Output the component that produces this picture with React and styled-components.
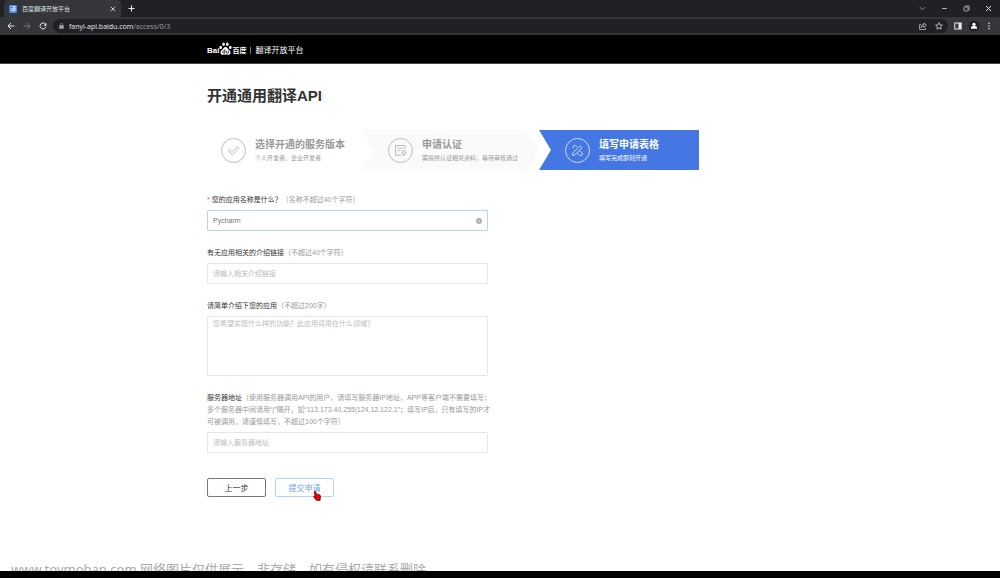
import React, { useState } from 'react'
import styled, { createGlobalStyle, css } from 'styled-components'

const steps = [
  { title: '选择开通的服务版本', note: '个人开发者、企业开发者', icon: 'check' },
  { title: '申请认证', note: '需提供认证相关资料，等待审核通过', icon: 'form', shape: 'middle' },
  { title: '填写申请表格', note: '填写完成即刻开通', icon: 'pencil', shape: 'active' },
]

function App() {
  return (
    <Page>
      <GlobalStyle />
      <TabStrip>
        <Tab>
          <Favicon>译</Favicon>
          <TabTitle>百度翻译开放平台</TabTitle>
          <IconButton aria-label="关闭标签页"><CloseIcon size={6} /></IconButton>
        </Tab>
        <NewTab aria-label="新标签页">
          <svg width="7" height="7" viewBox="0 0 7 7"><path d="M3.5 .5v6M.5 3.5h6" stroke="#e8eaed" strokeWidth="1.1" /></svg>
        </NewTab>
        <WindowButtons>
          <IconButton aria-label="搜索标签页">
            <svg width="7" height="7" viewBox="0 0 7 7"><path d="M1 2.2l2.5 2.5L6 2.2" fill="none" stroke="#9a9b9d" strokeWidth=".9" /></svg>
          </IconButton>
          <IconButton aria-label="最小化">
            <svg width="7" height="7" viewBox="0 0 7 7"><path d="M1 3.5h5" stroke="#bdc1c6" strokeWidth=".9" /></svg>
          </IconButton>
          <IconButton aria-label="还原">
            <svg width="7" height="7" viewBox="0 0 7 7" fill="none" stroke="#bdc1c6" strokeWidth=".8"><rect x="1" y="2" width="4" height="4" rx=".7" /><path d="M2.2 1.9V1h3.9v3.9h-1" /></svg>
          </IconButton>
          <IconButton aria-label="关闭"><CloseIcon size={7} /></IconButton>
        </WindowButtons>
      </TabStrip>

      <Toolbar>
        <NavButtons>
          <IconButton aria-label="后退">
            <svg width="8" height="8" viewBox="0 0 8 8" fill="none" stroke="#e8eaed"><path d="M7.3 4H1.2M4 1L1 4l3 3" /></svg>
          </IconButton>
          <IconButton aria-label="前进" disabled>
            <svg width="8" height="8" viewBox="0 0 8 8" fill="none" stroke="#75777a"><path d="M.7 4h6.1M4 1l3 3-3 3" /></svg>
          </IconButton>
          <IconButton aria-label="刷新">
            <svg width="8" height="8" viewBox="0 0 8 8"><path d="M6.6 2.3A3 3 0 1 0 7 4.7" fill="none" stroke="#e8eaed" /><path d="M7.4.7v3H4.5z" fill="#e8eaed" /></svg>
          </IconButton>
        </NavButtons>
        <AddressBar>
          <svg width="5" height="6" viewBox="0 0 5 6"><rect x=".3" y="2.3" width="4.4" height="3.5" rx=".4" fill="#a4a6a9" /><path d="M1.3 2.5V1.6a1.2 1.2 0 0 1 2.4 0v.9" fill="none" stroke="#a4a6a9" strokeWidth=".7" /></svg>
          <Url>fanyi-api.baidu.com<span>/access/0/3</span></Url>
          <IconButton aria-label="分享">
            <svg width="8" height="8" viewBox="0 0 8 8" fill="none" stroke="#bdc1c6" strokeWidth=".8"><path d="M2 2.5H.6v5h5.8V6" /><path d="M2.3 5.5c.1-2 1-2.9 2.7-3V1l2.5 2.2L5 5.4V4c-1.2 0-2 .4-2.7 1.5z" /></svg>
          </IconButton>
          <IconButton aria-label="收藏">
            <svg width="8" height="8" viewBox="0 0 8 8"><path d="M4 .7l1 2.2 2.400.2-1.800 1.600.5 2.400L4 5.900 1.900 7.100l.5-2.400L.6 3.100 3 2.900z" fill="none" stroke="#d5d7da" strokeWidth=".8" /></svg>
          </IconButton>
        </AddressBar>
        <IconButton aria-label="侧边栏">
          <svg width="8" height="8" viewBox="0 0 8 8"><rect x=".8" y="1" width="6.4" height="6" fill="none" stroke="#e8eaed" strokeWidth="1" /><path d="M4.5 1H7v6H4.500z" fill="#e8eaed" /></svg>
        </IconButton>
        <IconButton aria-label="个人资料">
          <svg width="12" height="12" viewBox="0 0 12 12"><circle cx="6" cy="6" r="5.5" fill="#202124" /><circle cx="6" cy="4.3" r="1.6" fill="#fff" /><path d="M3 8.800V7.400C3 6.500 4.500 6 6 6s3 .5 3 1.400v1.400z" fill="#fff" /></svg>
        </IconButton>
        <IconButton aria-label="菜单">
          <svg width="6" height="8" viewBox="0 0 6 8" fill="#e8eaed"><circle cx="3" cy="1.2" r=".8" /><circle cx="3" cy="4" r=".8" /><circle cx="3" cy="6.8" r=".8" /></svg>
        </IconButton>
      </Toolbar>

      <Header>
        <Brand href="#">
          <b>Bai</b>
          <PawIcon />
          <BrandName>百度</BrandName>
        </Brand>
        <Divider />
        <Platform href="#">翻译开放平台</Platform>
      </Header>

      <Main>
        <Title>开通通用翻译API</Title>
        <Steps>
          {steps.map((step) => (
            <Step key={step.title} $shape={step.shape}>
              <StepIcon name={step.icon} />
              <StepText $active={step.shape === 'active'}>
                <h2>{step.title}</h2>
                <p>{step.note}</p>
              </StepText>
            </Step>
          ))}
        </Steps>
        <ApplyForm />
      </Main>

      <Watermark>www.toymoban.com 网络图片仅供展示，非存储，如有侵权请联系删除。</Watermark>
      <BottomBar />
    </Page>
  )
}

function ApplyForm() {
  const [name, setName] = useState('Pycharm')

  return (
    <Form onSubmit={(e) => e.preventDefault()}>
      <Field>
        <Label htmlFor="name"><i>*</i> 您的应用名称是什么？<span>（名称不超过40个字符）</span></Label>
        <InputBox $focused>
          <Input id="name" value={name} onChange={(e) => setName(e.target.value)} />
          <IconButton type="button" aria-label="清空" onClick={() => setName('')}>
            <svg width="6" height="6" viewBox="0 0 6 6"><circle cx="3" cy="3" r="3" fill="#b0b0b0" /><path d="M2 2l2 2M4 2L2 4" stroke="#ddd" strokeWidth=".6" /></svg>
          </IconButton>
        </InputBox>
      </Field>
      <Field>
        <Label htmlFor="link">有无应用相关的介绍链接<span>（不超过40个字符）</span></Label>
        <InputBox>
          <Input id="link" placeholder="请输入相关介绍链接" />
        </InputBox>
      </Field>
      <Field>
        <Label htmlFor="intro">请简单介绍下您的应用<span>（不超过200字）</span></Label>
        <TextArea id="intro" placeholder="您希望实现什么样的功能？此应用将用在什么领域？" />
      </Field>
      <Field>
        <Label htmlFor="server">
          服务器地址
          <span>
            （使用服务器调用API的用户，请填写服务器IP地址，APP等客户端不需要填写；<br />
            多个服务器中间请用“|”隔开，如“113.173.40.255|124.12.122.1”；填写IP后，只有填写的IP才<br />
            可被调用，请谨慎填写，不超过100个字符）
          </span>
        </Label>
        <InputBox>
          <Input id="server" placeholder="请输入服务器地址" />
        </InputBox>
      </Field>
      <Actions>
        <Button type="button">上一步</Button>
        <Button type="submit" $light>
          提交申请
          <HandCursor />
        </Button>
      </Actions>
    </Form>
  )
}

function CloseIcon({ size }) {
  return (
    <svg width={size} height={size} viewBox="0 0 7 7"><path d="M1 1l5 5M6 1L1 6" stroke="#dfe1e5" strokeWidth="1" /></svg>
  )
}

function PawIcon() {
  return (
    <svg width="13" height="13" viewBox="0 0 13 13" fill="#fff">
      <ellipse cx="1.7" cy="5.5" rx="1.3" ry="1.7" />
      <ellipse cx="4.6" cy="2.3" rx="1.3" ry="1.8" />
      <ellipse cx="8.3" cy="2.3" rx="1.3" ry="1.8" />
      <ellipse cx="11.3" cy="5.5" rx="1.3" ry="1.7" />
      <path d="M6.500 5c1.500 0 2 1.400 3 2.500 1 1 2 1.600 2 3 0 1.500-1 2.300-2.500 2.300-1 0-1.700-.2-2.500-.2s-1.500.2-2.500.2c-1.500 0-2.500-.8-2.500-2.300 0-1.400 1-2 2-3C4.500 6.400 5 5 6.500 5z" />
      <path d="M5.800 7.300v3.800H4.500c-1.200 0-1.200-2.200 0-2.200h1.300M7.300 8.600v1.700c0 .6.300.8.8.8h1.200V8.600" fill="none" stroke="#000" strokeWidth=".7" />
    </svg>
  )
}

function StepIcon({ name }) {
  const color = name === 'pencil' ? '#dbe5fb' : '#b5b5b5'
  return (
    <svg width="25" height="25" viewBox="0 0 25 25" fill="none" stroke={color} strokeWidth=".9" strokeLinejoin="round">
      <circle cx="12.5" cy="12.5" r="12" />
      {name === 'check' && <path d="M7 12.800l1.500-1.500 2.700 2.600 5.300-5.200 1.500 1.500-6.800 6.700z" />}
      {name === 'form' && (
        <>
          <path d="M17 11V7.500H7.500v9.700h5.800M9.500 10.200h5.500M9.500 12.700h3" />
          <path d="M15.900 12l2.300 2.600h-1.200v2.600h-2.200v-2.600h-1.200z" />
        </>
      )}
      {name === 'pencil' && (
        <>
          <path d="M7.500 17.300l.6-2.600 6.900-7 2 2-7 7z" />
          <path d="M8.500 10.400a1.800 1.800 0 0 1 2.700-2.400l.7.800M14.500 12.500l2.500 2.300a1.700 1.700 0 0 1-2.400 2.400L12.500 15" />
        </>
      )}
    </svg>
  )
}

function HandCursor() {
  return (
    <Hand width="8" height="10" viewBox="0 0 8 10">
      <path d="M1.700.6c.7-.3 1.200.1 1.400.8l.6 2c2-.3 3.500.2 3.800 1.500.2 1.600-.2 2.500-.4 4.500l-3.600.2C2.500 8.300 1.300 7.200.5 5.700c.2-.7 1-.6 1.600-.1L1.100 1.500c-.1-.4.2-.8.6-.9z" fill="#e80000" stroke="#4a0808" strokeWidth=".6" />
    </Hand>
  )
}

export default App

const GlobalStyle = createGlobalStyle`
  * {
    box-sizing: border-box;
  }
  body {
    margin: 0;
    background: #fff;
    font-family: "Liberation Sans", "Noto Sans CJK SC", sans-serif;
  }
  button, input, textarea {
    font-family: inherit;
  }
  h1, h2, p {
    margin: 0;
  }
`
const Page = styled.div`
  min-height: 100vh;
  display: flex;
  flex-direction: column;
`
const IconButton = styled.button`
  display: flex;
  align-items: center;
  justify-content: center;
  padding: 0;
  border: 0;
  background: none;
`
const TabStrip = styled.div`
  display: flex;
  align-items: center;
  height: 17px;
  padding-left: 4px;
  background: #202124;
`
const Tab = styled.div`
  display: flex;
  align-items: center;
  align-self: stretch;
  width: 117px;
  padding: 0 5px;
  border-radius: 4px 4px 0 0;
  background: #35363a;
`
const Favicon = styled.span`
  width: 8px;
  margin-right: 5px;
  border-radius: 1px;
  background: #3f7ff0;
  color: #fff;
  font-size: 6px;
  line-height: 8px;
  text-align: center;
`
const TabTitle = styled.span`
  flex: 1;
  color: #dfe1e5;
  font-size: 6px;
  line-height: 8px;
`
const NewTab = styled(IconButton)`
  margin-left: 7px;
`
const WindowButtons = styled.div`
  display: flex;
  gap: 15px;
  margin-left: auto;
  padding-right: 8px;
`
const Toolbar = styled.div`
  display: flex;
  align-items: center;
  gap: 6px;
  height: 18px;
  padding: 0 8px 0 7px;
  background: #35363a;
`
const NavButtons = styled.div`
  display: flex;
  gap: 8px;
`
const AddressBar = styled.div`
  flex: 1;
  display: flex;
  align-items: center;
  gap: 8px;
  height: 14px;
  padding: 0 5px 0 6px;
  border-radius: 7px;
  background: #202124;
`
const Url = styled.span`
  flex: 1;
  margin-left: -3px;
  color: #e8eaed;
  font-family: "Open Sans", sans-serif;
  font-size: 7px;
  span {
    color: #9aa0a6;
  }
`
const Header = styled.header`
  display: flex;
  align-items: center;
  height: 29px;
  padding-left: 207px;
  border-bottom: 1px solid #444;
  background: #000;
`
const Brand = styled.a`
  display: flex;
  align-items: flex-end;
  margin-bottom: 2px;
  color: #fff;
  font-size: 8px;
  line-height: 9px;
  text-decoration: none;
`
const BrandName = styled.b`
  font-size: 7px;
`
const Divider = styled.span`
  width: 1px;
  height: 7px;
  margin: 2px 4px 0;
  background: #777;
`
const Platform = styled.a`
  padding-top: 3px;
  color: #fff;
  font-size: 8px;
  line-height: 12px;
  text-decoration: none;
`
const Main = styled.main`
  flex: 1;
  padding: 22px 0 0 207px;
`
const Title = styled.h1`
  margin-bottom: 24px;
  color: #333;
  font-size: 15px;
  line-height: 20px;
`
const Steps = styled.div`
  display: grid;
  grid-template-columns: 154px 178px 160px;
  margin-bottom: 24px;
`
const Step = styled.div`
  display: flex;
  align-items: center;
  gap: 9px;
  height: 40px;
  padding-left: 14px;
  ${(props) => props.$shape === 'middle' && css`
    padding-left: 27px;
    background: #fafafa;
    clip-path: polygon(0 0, calc(100% - 12px) 0, 100% 50%, calc(100% - 12px) 100%, 0 100%, 12px 50%);
  `}
  ${(props) => props.$shape === 'active' && css`
    padding-left: 26px;
    background: #4476e4;
    clip-path: polygon(0 0, 100% 0, 100% 100%, 0 100%, 12px 50%);
  `}
`
const StepText = styled.div`
  color: ${(props) => (props.$active ? '#fff' : '#999')};
  white-space: nowrap;
  h2 {
    font-size: 10px;
    line-height: 16px;
  }
  p {
    font-size: 6px;
    line-height: 10px;
  }
`
const Form = styled.form`
  width: 281px;
`
const Field = styled.div`
  margin-bottom: 16px;
`
const Label = styled.label`
  display: block;
  margin-bottom: 4px;
  color: #333;
  font-size: 7px;
  line-height: 12px;
  white-space: nowrap;
  span {
    color: #999;
  }
  i {
    color: #e64545;
    font-style: normal;
  }
`
const InputBox = styled.div`
  display: flex;
  align-items: center;
  height: 21px;
  padding: 0 5px;
  border: 1px solid ${(props) => (props.$focused ? '#b5d3f7' : '#e6e6e6')};
  border-radius: 1px;
`
const Input = styled.input`
  flex: 1;
  padding: 0;
  border: 0;
  outline: 0;
  background: none;
  color: #777;
  font-size: 7px;
  line-height: 12px;
  &::placeholder {
    color: #bbb;
  }
`
const TextArea = styled.textarea`
  display: block;
  width: 100%;
  height: 60px;
  padding: 1px 5px;
  border: 1px solid #e6e6e6;
  border-radius: 1px;
  outline: 0;
  resize: none;
  font-size: 7px;
  line-height: 12px;
  &::placeholder {
    color: #bbb;
  }
`
const Actions = styled.div`
  display: flex;
  gap: 9px;
  margin-top: 25px;
`
const Button = styled.button`
  position: relative;
  width: 59px;
  height: 19px;
  padding: 0;
  border: 1px solid ${(props) => (props.$light ? '#b5d3f7' : '#777')};
  border-radius: 2px;
  background: #fff;
  color: ${(props) => (props.$light ? '#6ba4f0' : '#333')};
  font-size: 8px;
`
const Hand = styled.svg`
  position: absolute;
  right: 12px;
  bottom: -5px;
`
const Watermark = styled.div`
  height: 9px;
  padding-left: 11px;
  overflow: hidden;
  color: #aaa;
  font-family: "Noto Sans", "Noto Sans CJK SC", sans-serif;
  font-size: 13px;
  line-height: 15px;
  white-space: nowrap;
`
const BottomBar = styled.footer`
  height: 7px;
  background: #000;
`
